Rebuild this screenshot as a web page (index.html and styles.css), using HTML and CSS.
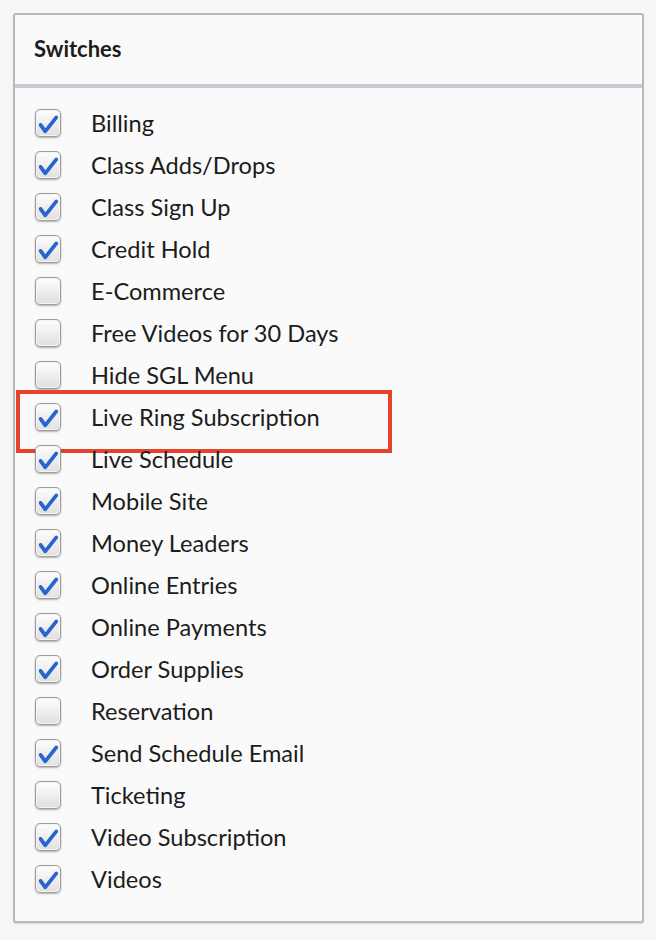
FILE: index.html
```html
<html>
<head>
<link rel="stylesheet" href="styles.css">
<title>Switches</title>
</head>
<body>
<div class="panel">
  <div class="panel-heading">Switches</div>
  <ul class="switch-list">
    <li class="switch"><span class="box on"><svg viewBox="0 0 26 28"><path d="M5 16 L10 23 L22 8"/></svg></span>Billing</li>
    <li class="switch"><span class="box on"><svg viewBox="0 0 26 28"><path d="M5 16 L10 23 L22 8"/></svg></span>Class Adds/Drops</li>
    <li class="switch"><span class="box on"><svg viewBox="0 0 26 28"><path d="M5 16 L10 23 L22 8"/></svg></span>Class Sign Up</li>
    <li class="switch"><span class="box on"><svg viewBox="0 0 26 28"><path d="M5 16 L10 23 L22 8"/></svg></span>Credit Hold</li>
    <li class="switch"><span class="box"></span>E-Commerce</li>
    <li class="switch"><span class="box"></span>Free Videos for 30 Days</li>
    <li class="switch"><span class="box"></span>Hide SGL Menu</li>
    <li class="switch highlight"><span class="box on"><svg viewBox="0 0 26 28"><path d="M5 16 L10 23 L22 8"/></svg></span>Live Ring Subscription</li>
    <li class="switch"><span class="box on"><svg viewBox="0 0 26 28"><path d="M5 16 L10 23 L22 8"/></svg></span>Live Schedule</li>
    <li class="switch"><span class="box on"><svg viewBox="0 0 26 28"><path d="M5 16 L10 23 L22 8"/></svg></span>Mobile Site</li>
    <li class="switch"><span class="box on"><svg viewBox="0 0 26 28"><path d="M5 16 L10 23 L22 8"/></svg></span>Money Leaders</li>
    <li class="switch"><span class="box on"><svg viewBox="0 0 26 28"><path d="M5 16 L10 23 L22 8"/></svg></span>Online Entries</li>
    <li class="switch"><span class="box on"><svg viewBox="0 0 26 28"><path d="M5 16 L10 23 L22 8"/></svg></span>Online Payments</li>
    <li class="switch"><span class="box on"><svg viewBox="0 0 26 28"><path d="M5 16 L10 23 L22 8"/></svg></span>Order Supplies</li>
    <li class="switch"><span class="box"></span>Reservation</li>
    <li class="switch"><span class="box on"><svg viewBox="0 0 26 28"><path d="M5 16 L10 23 L22 8"/></svg></span>Send Schedule Email</li>
    <li class="switch"><span class="box"></span>Ticketing</li>
    <li class="switch"><span class="box on"><svg viewBox="0 0 26 28"><path d="M5 16 L10 23 L22 8"/></svg></span>Video Subscription</li>
    <li class="switch"><span class="box on"><svg viewBox="0 0 26 28"><path d="M5 16 L10 23 L22 8"/></svg></span>Videos</li>
  </ul>
</div>
</body>
</html>
```

FILE: styles.css
```css
/* page */
* {box-sizing: border-box;}

body {
  margin: 0;
  padding: 13px 12px 0 13px;
  background-color: #f6f6f6;
  font-family: Lato, "Open Sans", Arial, sans-serif;
  color: #1c1c1c;
}

/* panel */
.panel {
  height: 910px;
  background-color: #fafafa;
  border: 2px solid #b9b9b9;
  border-radius: 3px;
  box-shadow: 0 1px 1px rgba(0,0,0,0.12);
}

.panel-heading {
  height: 73px;
  padding: 0 0 3px 19px;
  display: flex;
  align-items: center;
  font-size: 22px;
  font-weight: bold;
  border-bottom: 4px solid #c6ccd4;
}

/* checkbox list */
.switch-list {
  list-style: none;
  margin: 0;
  padding: 14px 0 0 0;
}

.switch {
  position: relative;
  height: 42px;
  padding-left: 20px;
  display: flex;
  align-items: center;
  gap: 30px;
  font-size: 23.6px;
}

.switch.highlight::after {
  content: "";
  position: absolute;
  left: 1px;
  top: -6px;
  width: 368px;
  height: 55px;
  border: 4px solid #e8412c;
}

.box {
  flex: none;
  width: 26px;
  height: 28px;
  border: 1px solid #9c9c9c;
  border-radius: 5px;
  background: linear-gradient(#fdfdfd, #e0e0e0);
  box-shadow: 0 1px 2px rgba(0,0,0,0.3), inset 0 0 0 1px #f4f4f4;
}

.box svg {
  display: block;
  width: 24px;
  height: 26px;
}

.box svg path {
  fill: none;
  stroke: #2863d0;
  stroke-width: 4;
  stroke-linecap: round;
  stroke-linejoin: round;
}
```
